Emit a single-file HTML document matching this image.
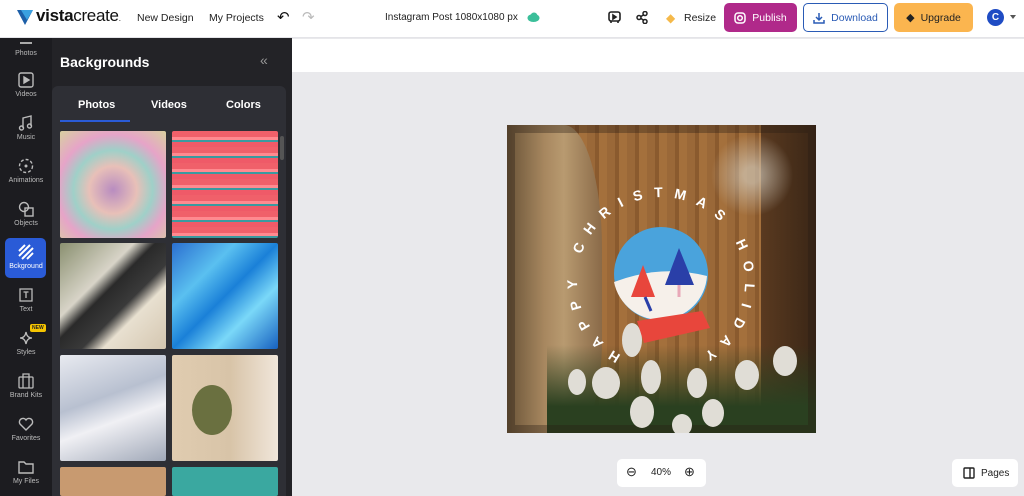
<!DOCTYPE html>
<html><head><meta charset="utf-8"><style>
*{margin:0;padding:0;box-sizing:border-box}
body{width:1024px;height:496px;overflow:hidden;font-family:"Liberation Sans",sans-serif;background:#e9e9ec;position:relative}
.top{position:absolute;left:0;top:0;width:1024px;height:38px;background:#fff;border-bottom:1px solid #e4e4e8}
.t{position:absolute;font-size:10.5px;color:#222;top:12px}
.btn{position:absolute;top:3px;height:29px;border-radius:5px;font-size:10.5px;display:flex;align-items:center;justify-content:center;gap:6px}
.rail{position:absolute;left:0;top:38px;width:52px;height:458px;background:#1c1c20}
.ri{position:absolute;left:0;width:52px;text-align:center;color:#bbb;font-size:7px}
.ri svg{display:block;margin:0 auto 3px}
.panel{position:absolute;left:52px;top:38px;width:240px;height:458px;background:#232327}
.card{position:absolute;left:52px;top:86px;width:234px;height:410px;background:#2e2f35;border-radius:6px 6px 0 0}
.th{position:absolute;width:106px;border-radius:2px}
</style></head><body>
<div class="top">
  <svg style="position:absolute;left:17px;top:9px" width="16" height="16" viewBox="0 0 16 16"><path d="M0 1h16L8 16z" fill="#1d5fa8"/><path d="M4 1h12L10 11z" fill="#3aa0e0"/></svg>
  <div style="position:absolute;left:36px;top:6px;font-size:17px;color:#111;letter-spacing:-0.3px"><b>vista</b>create<span style="font-size:8px">.</span></div>
  <div class="t" style="left:137px">New Design</div>
  <div class="t" style="left:209px">My Projects</div>
  <div class="t" style="left:277px;top:8px;font-size:15px;color:#111">↶</div>
  <div class="t" style="left:302px;top:8px;font-size:15px;color:#bbb">↷</div>
  <div class="t" style="left:385px;font-size:10px">Instagram Post 1080x1080 px</div>
  <svg style="position:absolute;left:527px;top:12px" width="13" height="10"><ellipse cx="6.5" cy="6" rx="6" ry="4" fill="#3bbf9a"/><circle cx="7" cy="4" r="3.5" fill="#3bbf9a"/></svg>
  <svg style="position:absolute;left:608px;top:11px" width="13" height="13" fill="none" stroke="#222" stroke-width="1.6"><rect x="1" y="1" width="11" height="9" rx="2"/><path d="M5 4l3 2-3 2z" fill="#222"/><path d="M3 10v2M10 10v2"/></svg>
  <svg style="position:absolute;left:636px;top:11px" width="12" height="13" fill="none" stroke="#222" stroke-width="1.5"><circle cx="3" cy="6.5" r="2"/><circle cx="9" cy="2.5" r="2"/><circle cx="9" cy="10.5" r="2"/><path d="M5 5.5l3-2M5 7.5l3 2"/></svg>
  <div class="t" style="left:666px;top:11px;color:#f5b94a;font-size:12px">◆</div>
  <div class="t" style="left:684px">Resize</div>
  <div class="btn" style="left:724px;width:73px;background:#b0298a;color:#fff"><svg width="12" height="12" fill="none" stroke="#fff" stroke-width="1.5"><rect x="1" y="1" width="10" height="10" rx="3"/><circle cx="6" cy="6" r="2.3"/></svg>Publish</div>
  <div class="btn" style="left:803px;width:85px;border:1.5px solid #2a5bb5;color:#2a5bb5;background:#fff"><svg width="12" height="12" fill="none" stroke="#2a5bb5" stroke-width="1.5"><path d="M6 1v7M3 5l3 3 3-3M1 8v3h10V8"/></svg>Download</div>
  <div class="btn" style="left:894px;width:79px;background:#fbb54f;color:#222"><span style="font-size:11px">◆</span>Upgrade</div>
  <div style="position:absolute;left:987px;top:9px;width:17px;height:17px;border-radius:50%;background:#1f4cc4;color:#fff;font-size:10px;text-align:center;line-height:17px;font-weight:bold">C</div>
  <div style="position:absolute;left:1010px;top:15px;border:3px solid transparent;border-top:4px solid #555"></div>
</div>
<div style="position:absolute;left:292px;top:39px;width:732px;height:33px;background:#fff"></div>

<div class="rail">
  <div class="ri" style="top:4px"><div style="width:12px;height:2px;background:#aaa;margin:0 auto 6px"></div>Photos</div>
  <div class="ri" style="top:34px"><svg width="16" height="16" fill="none" stroke="#bbb" stroke-width="1.4"><rect x="1" y="1" width="14" height="14" rx="2"/><path d="M6 5l5 3-5 3z" fill="#bbb"/></svg>Videos</div>
  <div class="ri" style="top:77px"><svg width="16" height="16" fill="none" stroke="#bbb" stroke-width="1.4"><path d="M5 13V3l8-2v10"/><circle cx="3.5" cy="13" r="2"/><circle cx="11.5" cy="11" r="2"/></svg>Music</div>
  <div class="ri" style="top:120px"><svg width="16" height="16" fill="none" stroke="#bbb" stroke-width="1.4" stroke-dasharray="3 2"><circle cx="8" cy="8" r="6.5"/><circle cx="8" cy="8" r="1.5" fill="#bbb" stroke="none"/></svg>Animations</div>
  <div class="ri" style="top:163px"><svg width="16" height="16" fill="none" stroke="#bbb" stroke-width="1.4"><circle cx="6" cy="6" r="4.5"/><rect x="7" y="7" width="8" height="8"/></svg>Objects</div>
  <div style="position:absolute;left:5px;top:200px;width:41px;height:40px;background:#2a5bd7;border-radius:5px"></div>
  <div class="ri" style="top:206px;color:#fff"><svg width="16" height="16" stroke="#fff" stroke-width="2"><path d="M1 7l6-6M1 12l11-11M4 15l11-11M9 15l6-6"/></svg>Bckground</div>
  <div class="ri" style="top:249px"><svg width="16" height="16" fill="none" stroke="#bbb" stroke-width="1.3"><rect x="2" y="2" width="12" height="12"/><path d="M5.5 5h5M8 5v6"/></svg>Text</div>
  <div style="position:absolute;left:30px;top:286px;background:#f5c400;color:#222;font-size:5px;font-weight:bold;padding:1px 2px;border-radius:2px">NEW</div>
  <div class="ri" style="top:292px"><svg width="16" height="16" fill="none" stroke="#bbb" stroke-width="1.3"><path d="M8 2q1 6 6 6q-5 0-6 6q-1-6-6-6q5 0 6-6z"/></svg>Styles</div>
  <div class="ri" style="top:335px"><svg width="16" height="16" fill="none" stroke="#bbb" stroke-width="1.3"><rect x="1" y="4" width="14" height="11" rx="1"/><path d="M5 4V1h6v3M5 4v11M11 4v11"/></svg>Brand Kits</div>
  <div class="ri" style="top:378px"><svg width="16" height="16" fill="none" stroke="#bbb" stroke-width="1.4"><path d="M8 14L2 8a3.3 3.3 0 0 1 6-4a3.3 3.3 0 0 1 6 4z"/></svg>Favorites</div>
  <div class="ri" style="top:421px"><svg width="16" height="16" fill="none" stroke="#bbb" stroke-width="1.4"><path d="M1 3h5l2 2h7v9H1z"/></svg>My Files</div>
</div>

<div class="panel">
  <div style="position:absolute;left:8px;top:16px;color:#fff;font-size:14px;font-weight:bold">Backgrounds</div>
  <div style="position:absolute;left:208px;top:14px;color:#999;font-size:14px">«</div>
</div>
<div class="card">
  <div style="position:absolute;left:26px;top:13px;color:#fff;font-size:11px;font-weight:bold">Photos</div>
  <div style="position:absolute;left:99px;top:13px;color:#fff;font-size:11px;font-weight:bold">Videos</div>
  <div style="position:absolute;left:174px;top:13px;color:#fff;font-size:11px;font-weight:bold">Colors</div>
  <div style="position:absolute;left:8px;top:34px;width:70px;height:2px;background:#2a5bd7"></div>
  <div style="position:absolute;left:228px;top:50px;width:4px;height:24px;background:#555;border-radius:2px"></div>
</div>
<div class="th" style="left:60px;top:131px;height:107px;background:radial-gradient(circle at 50% 55%,#b88cc0,#e8c0b8 30%,#9fd0c8 50%,#e6a4c8 70%,#d8d0a0)"></div>
<div class="th" style="left:172px;top:131px;height:107px;background:repeating-linear-gradient(180deg,#f0606a 0 6px,#ff8a90 6px 9px,#3a9aa0 9px 11px,#ef5a68 11px 16px)"></div>
<div class="th" style="left:60px;top:243px;height:106px;background:linear-gradient(135deg,#8a9070,#d8d4c8 35%,#2a2a2a 45%,#3a3a3a 60%,#e8e0d0 70%,#d4c6b0)"></div>
<div class="th" style="left:172px;top:243px;height:106px;background:linear-gradient(135deg,#2b6fd0,#5ac0f0 30%,#1a80d8 50%,#7ad8f8 70%,#1660c0)"></div>
<div class="th" style="left:60px;top:355px;height:106px;background:linear-gradient(160deg,#e8eaf0,#b8c0d0 40%,#f0f0f4 60%,#a0a8b8)"></div>
<div class="th" style="left:172px;top:355px;height:106px;background:linear-gradient(90deg,#e0ccb0,#d8c4a8 55%,#f0e6da);"><div style="position:absolute;left:20px;top:30px;width:40px;height:50px;border-radius:50%;background:#6a7040"></div></div>
<div class="th" style="left:60px;top:467px;height:29px;background:#c89a70"></div>
<div class="th" style="left:172px;top:467px;height:29px;background:#3aa8a0"></div>

<!-- canvas -->
<div style="position:absolute;left:507px;top:125px;width:309px;height:308px;background:#8a5a30;overflow:hidden">
  <div style="position:absolute;inset:0;background:repeating-linear-gradient(90deg,#9a6838 0 8px,#8a5a2e 8px 12px,#a4703c 12px 20px)"></div>
  <div style="position:absolute;left:0;top:0;width:95px;height:308px;background:linear-gradient(90deg,#6a5438,#a88860 40%,#b89a70 60%,#8a6a48);border-radius:0 40% 30% 0"></div>
  <div style="position:absolute;right:0;top:0;width:55px;height:308px;background:linear-gradient(90deg,#5a3a20,#3a2616)"></div>
  <div style="position:absolute;left:180px;top:0;width:130px;height:100px;background:radial-gradient(circle,#d8d4c8 0 10%,transparent 50%);opacity:.6"></div>
  <div style="position:absolute;left:40px;top:220px;width:270px;height:88px;background:linear-gradient(180deg,transparent,#2a4020 70%)"></div>
  <div style="position:absolute;inset:0;border:8px solid rgba(40,30,20,.35)"></div>
  <svg style="position:absolute;left:0;top:0" width="309" height="308">
    <g fill="#e0ddd6">
      <ellipse cx="125" cy="215" rx="10" ry="17"/><ellipse cx="144" cy="252" rx="10" ry="17"/><ellipse cx="99" cy="258" rx="14" ry="16"/>
      <ellipse cx="70" cy="257" rx="9" ry="13"/><ellipse cx="135" cy="287" rx="12" ry="16"/><ellipse cx="190" cy="258" rx="10" ry="15"/>
      <ellipse cx="206" cy="288" rx="11" ry="14"/><ellipse cx="240" cy="250" rx="12" ry="15"/><ellipse cx="278" cy="236" rx="12" ry="15"/><ellipse cx="175" cy="300" rx="10" ry="11"/>
    </g>
    <circle cx="154" cy="149" r="47" fill="#4aa3dc"/>
    <path d="M107 157 Q154 139 200 151 A47 47 0 0 1 107 157z" fill="#f6f0ea"/>
    <path d="M130 196 L195 186 L203 203 L137 218z" fill="#e8463c"/>
    <path d="M136 140 L148 172 L124 172z" fill="#e8463c"/><path d="M138 172 L144 186" stroke="#2a3fa8" stroke-width="3"/>
    <path d="M172 123 L187 160 L158 160z" fill="#2a3fa8"/><path d="M172 160v12" stroke="#e8a8b8" stroke-width="3"/>
    <defs><path id="arc" d="M114 230 A84 84 0 1 1 194 230"/></defs>
    <text font-family="Liberation Sans,sans-serif" font-size="14" font-weight="bold" fill="#fff"><textPath href="#arc" textLength="440" lengthAdjust="spacing">HAPPY CHRISTMAS HOLIDAY</textPath></text>
  </svg>
</div>

<div style="position:absolute;left:617px;top:459px;width:89px;height:28px;background:#fff;border-radius:5px;font-size:10px;color:#222">
  <span style="position:absolute;left:9px;top:5px;font-size:13px">⊖</span><span style="position:absolute;left:34px;top:8px">40%</span><span style="position:absolute;left:67px;top:5px;font-size:13px">⊕</span>
</div>
<div style="position:absolute;left:952px;top:459px;width:66px;height:28px;background:#fff;border-radius:5px;font-size:10px;color:#222">
  <svg style="position:absolute;left:11px;top:8px" width="12" height="12" fill="none" stroke="#222" stroke-width="1.4"><rect x="1" y="1" width="10" height="10" rx="1"/><path d="M7 1v10"/></svg>
  <span style="position:absolute;left:29px;top:9px">Pages</span>
</div>
</body></html>
